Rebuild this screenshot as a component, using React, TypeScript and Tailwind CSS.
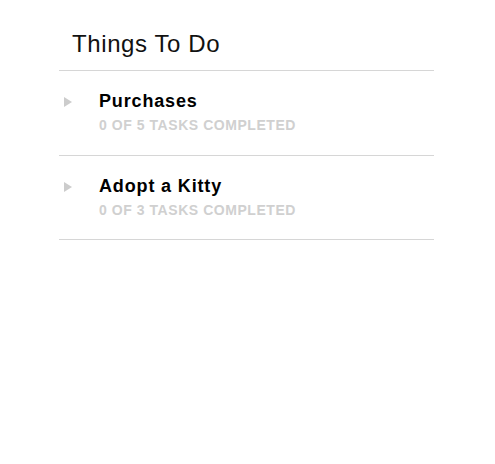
const lists = [
  { name: "Purchases", done: 0, total: 5 },
  { name: "Adopt a Kitty", done: 0, total: 3 },
]

export default function App() {
  return (
    <div className="min-h-screen bg-white font-['Liberation_Sans',Arial,sans-serif]">
      <div className="ml-[59px] w-[375px] pt-[30px]">
        <h1 className="pl-[13px] pb-[12px] text-[24px] leading-[28px] font-normal tracking-[0.6px] text-[#111]">
          Things To Do
        </h1>
        <ul className="border-t border-[#d6d6d6]">
          {lists.map((list) => (
            <li key={list.name} className="flex border-b border-[#d6d6d6] pt-[19px] pb-[20.5px]">
              <div className="w-[40px] pl-[5px] pt-[7px]">
                <svg width="9" height="10" viewBox="0 0 9 10">
                  <polygon points="0,0 8,5 0,10" fill="#cccccc" />
                </svg>
              </div>
              <div className="flex flex-col gap-[5px]">
                <span className="text-[18px] leading-[22px] font-bold tracking-[0.85px] text-black">{list.name}</span>
                <span className="text-[14px] leading-[17px] font-bold uppercase tracking-[0.55px] text-[#d0d0d0]">
                  {list.done} of {list.total} tasks completed
                </span>
              </div>
            </li>
          ))}
        </ul>
      </div>
    </div>
  )
}
